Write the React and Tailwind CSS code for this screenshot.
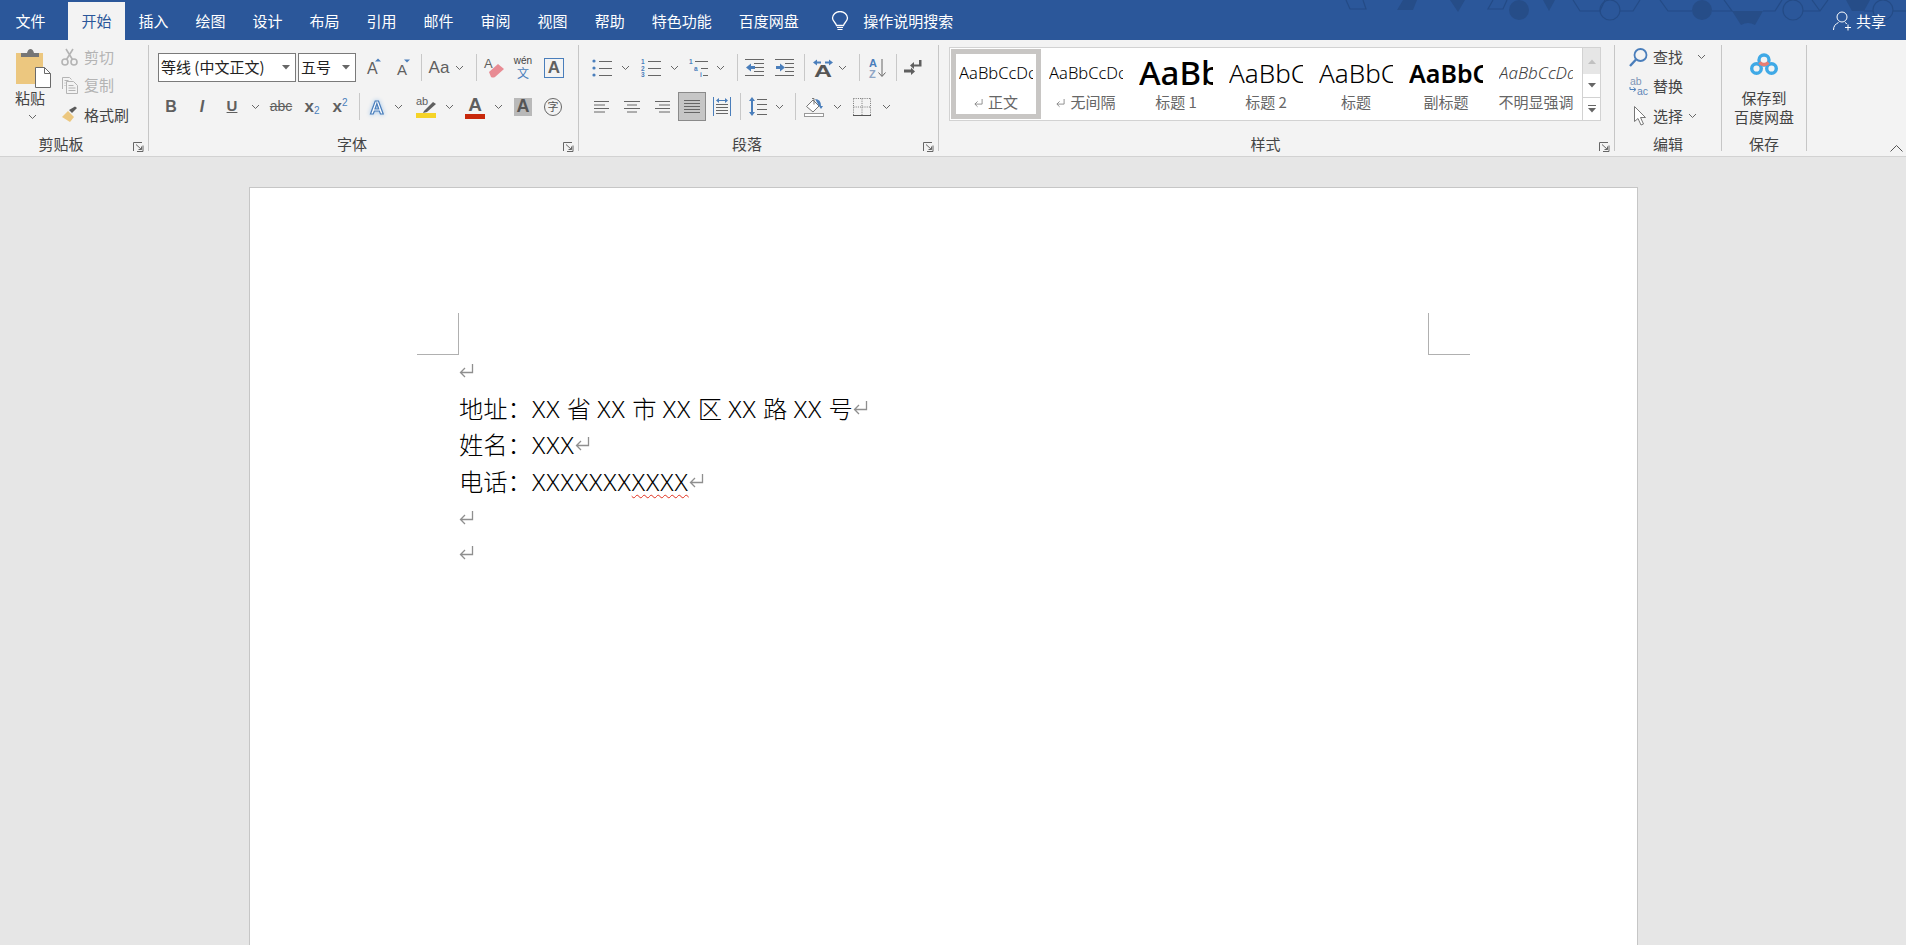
import React from "react";

const BLUE = "#4a7ebb";
const GR = "#5f5f5f";

const I = ({ c, children }) => (
  <div className={"flex items-center justify-center shrink-0 " + c}>{children}</div>
);
const Chev = ({ c }) => (
  <I c={"w-[10px] " + c}>
    <svg width="9" height="6" viewBox="0 0 9 6"><path d="M1 1l3.5 3.5L8 1" fill="none" stroke="#666" /></svg>
  </I>
);
const Sep = ({ c }) => <div className={"w-px h-[27px] bg-[#c8c8c8] shrink-0 " + c} />;
const Tri = () => (
  <svg width="8" height="5" viewBox="0 0 8 5"><path d="M0 0h8L4 4.5z" fill="#666" /></svg>
);
const Launcher = () => (
  <svg className="absolute right-[4px] bottom-[-1px]" width="11" height="10" viewBox="0 0 11 10">
    <path d="M.5 9V.5H9M10 3.5v6H4M3 2.5l5.5 5M8.5 4.5v3h-3" fill="none" stroke="#666" />
  </svg>
);
const Group = ({ c, label, lc, launcher, children }) => (
  <div className={"relative h-[106px] my-[5px] border-r border-[#c6c6c6] shrink-0 flex flex-col " + c}>
    <div className="h-[89px] shrink-0">{children}</div>
    <div className={"h-[20px] leading-[20px] shrink-0 text-center text-[15px] text-[#444] " + lc}>{label}</div>
    {launcher && <Launcher />}
  </div>
);
const Row = ({ c, children }) => <div className={"flex items-center h-[29px] " + c}>{children}</div>;

const Return = ({ c, color = "#8f8f8f", s = 1 }) => (
  <svg className={c} width={15 * s} height={14 * s} viewBox="0 0 15 14">
    <path d="M13.500 0v8.500H1.500M6 4l-4.500 4.500L6 13" fill="none" stroke={color} strokeWidth="1.300" />
  </svg>
);
const X = ({ children }) => <span className="tracking-[0.94px]">{children}</span>;

const Lines = ({ ys, x1, x2 }) => (
  <path d={ys.map((y) => `M${x1} ${y}H${x2}`).join("")} stroke="#666" fill="none" />
);

function Align({ kind }) {
  const rows = {
    left: [[0, 15], [0, 11], [0, 15], [0, 11]],
    center: [[0, 16], [3, 13], [0, 16], [3, 13]],
    right: [[1, 16], [5, 16], [1, 16], [5, 16]],
  }[kind];
  return (
    <svg width="16" height="14" viewBox="0 0 16 14">
      <path d={rows.map((r, i) => `M${r[0]} ${1.5 + i * 3.5}H${r[1]}`).join("")} stroke="#666" fill="none" />
    </svg>
  );
}

const sampleBase = "h-[38px] leading-[38px] w-[74px] mx-auto overflow-hidden whitespace-nowrap text-left font-['Noto_Sans',sans-serif] ";
const styles = [
  { t: "AaBbCcDc", l: "正文", r: 1, s: "text-[16.5px] font-light text-black", sel: 1 },
  { t: "AaBbCcDc", l: "无间隔", r: 1, s: "text-[16.5px] font-light text-black" },
  { t: "AaBb", l: "标题 1", s: "text-[33px] font-medium text-black" },
  { t: "AaBbC", l: "标题 2", s: "text-[26px] font-light text-black" },
  { t: "AaBbC", l: "标题", s: "text-[26px] font-light text-black" },
  { t: "AaBbC", l: "副标题", s: "text-[25px] font-semibold text-black" },
  { t: "AaBbCcDd", l: "不明显强调", s: "text-[17px] font-light italic text-[#404040]" },
];

export default function App() {
  return (
    <div className="h-[945px] w-full overflow-hidden flex flex-col bg-[#e6e6e6] font-['Noto_Sans_CJK_SC',sans-serif] text-[15px]">
      {/* title / tabs */}
      <div className="relative h-[40px] bg-[#2b579a] flex items-end text-white shrink-0">
        <svg className="absolute right-0 top-0" width="606" height="40" viewBox="1300 0 606 40">
          <g fill="#264d88">
            <path d="M1403 0h14l-4 10h-16z" />
            <path d="M1450 0h15l-7 12z" />
            <circle cx="1519" cy="10" r="10" />
            <path d="M1543 0h12l-6 11z" />
            <circle cx="1702" cy="10" r="10" />
            <path d="M1732 11h31l-8 14q-7-4-14 0z" />
            <path d="M1846 0h24l-6 11h-12z" />
          </g>
          <g fill="none" stroke="#244b86" strokeWidth="1.200">
            <path d="M1346 0l4 9h16l-3-9" />
            <path d="M1493 0l-5 9h15l4-9" />
            <path d="M1573 0l7 11h20l5-11M1620 11h13l7-11" />
            <circle cx="1610" cy="10" r="10" />
            <path d="M1660 0l8 11h24M1712 11h20l-8-11M1763 11h12l7-11M1732 11l-8-11" />
            <circle cx="1793" cy="10" r="10" />
            <path d="M1803 11h17l8-11M1820 11l-8-11M1864 11h9" />
            <circle cx="1883" cy="10" r="10" />
            <path d="M1893 11h13" />
          </g>
        </svg>
        <div className="relative w-[61px] h-[38px] leading-[38px] text-center">文件</div>
        <div className="relative ml-[7px] w-[57px] h-[38px] leading-[38px] text-center bg-[#f3f3f3] text-[#2b579a]">开始</div>
        {["插入", "绘图", "设计", "布局", "引用", "邮件", "审阅", "视图", "帮助", "特色功能", "百度网盘"].map((t) => (
          <div key={t} className="relative px-[13.5px] h-[38px] leading-[38px]">{t}</div>
        ))}
        <div className="relative ml-[19px] h-[38px] flex items-center">
          <svg width="18" height="21" viewBox="0 0 18 21">
            <path d="M5.500 14.500C5 11.500 1.500 10.500 1.500 7a7.500 6.500 0 0 1 15 0c0 3.500-3.500 4.500-4 7.500z" fill="none" stroke="#fff" strokeWidth="1.300" />
            <path d="M6 16.500h6M6.500 18.500h5" stroke="#fff" strokeWidth="1.200" />
          </svg>
          <span className="ml-[14px]">操作说明搜索</span>
        </div>
        <div className="relative ml-auto mr-[20px] h-[38px] flex items-center">
          <svg width="20" height="20" viewBox="0 0 20 20">
            <circle cx="9" cy="6" r="5" fill="none" stroke="#fff" />
            <path d="M.5 19c0-4 2-6 5-7.500M12 11.500c.8.4 1.500.9 2 1.500M15 13.500v6M12 16.500h6" fill="none" stroke="#fff" />
          </svg>
          <span className="ml-[3px]">共享</span>
        </div>
      </div>

      {/* ribbon */}
      <div className="h-[116px] bg-[#f3f3f3] flex shrink-0">
        {/* clipboard */}
        <Group c="w-[149px]" label="剪贴板" lc="pr-[26px]" launcher>
          <div className="flex">
            <div className="w-[61px] shrink-0 flex flex-col">
              <svg className="ml-[16px] mt-[4px]" width="35" height="39" viewBox="0 0 35 39">
                <rect x="0" y="4" width="27" height="31" fill="#ecc77f" />
                <path d="M5 8V4h6q1-4 3.500-4T18 4h5v4z" fill="#767676" />
                <path d="M19.500 18.500h9l6 6v14h-15z" fill="#fff" stroke="#6a6a6a" />
                <path d="M28.500 18.500v6h6" fill="none" stroke="#6a6a6a" />
              </svg>
              <div className="w-[60px] text-center h-[20px] leading-[20px] text-[#444]">粘贴</div>
              <div className="flex justify-center w-[64px] mt-[6px]"><Chev /></div>
            </div>
            <div className="flex flex-col">
              <div className="h-[24px] flex items-center text-[#b4b4b4]">
                <svg width="23" height="18" viewBox="0 0 23 18">
                  <g fill="none" stroke="#b4b4b4" strokeWidth="1.600">
                    <circle cx="4" cy="14" r="3" /><circle cx="13" cy="14" r="3" />
                    <path d="M5.500 11.500L12 1M11.500 11.500L5 1" />
                  </g>
                </svg>
                <span>剪切</span>
              </div>
              <div className="h-[24px] mt-[4px] flex items-center text-[#b4b4b4]">
                <svg width="23" height="18" viewBox="0 0 23 18">
                  <g fill="none" stroke="#b4b4b4">
                    <path d="M1.500 13V1.500h7l2 2" />
                    <path d="M5.500 5.500h7l4 4v8h-11z" />
                    <path d="M3.500 4.500h4M3.500 7h1M3.500 9.500h1M7.500 9.500h5M7.500 12h7M7.500 14.500h7" />
                  </g>
                </svg>
                <span>复制</span>
              </div>
              <div className="h-[24px] mt-[6px] flex items-center text-[#444]">
                <svg width="23" height="18" viewBox="0 0 23 18">
                  <path d="M1 11l6-6 6 6-4 5z" fill="#ecc77f" />
                  <path d="M8 4l3 3 5-5-2-1.500z" fill="#5a5a5a" />
                </svg>
                <span>格式刷</span>
              </div>
            </div>
          </div>
        </Group>

        {/* font */}
        <Group c="w-[430px]" label="字体" lc="pr-[23px]" launcher>
          <Row c="mt-[8px]">
            <div className="ml-[9px] w-[138px] h-[29px] bg-white border border-[#7a7a7a] flex items-center justify-between pl-[2px] pr-[5px] text-[#222]">
              <span>等线 (中文正文)</span><Tri />
            </div>
            <div className="ml-[2px] w-[58px] h-[29px] bg-white border border-[#7a7a7a] flex items-center justify-between pl-[2px] pr-[5px] text-[#222]">
              <span>五号</span><Tri />
            </div>
            <I c="ml-[6px] w-[22px] h-[29px]">
              <svg className="overflow-visible" width="22" height="22" viewBox="0 0 22 22">
                <text x="5" y="16.500" fontSize="16" fontFamily="Liberation Sans" fill={GR}>A</text>
                <path d="M13 4.500l3-3 3 3z" fill={BLUE} />
              </svg>
            </I>
            <I c="ml-[7px] w-[22px] h-[29px]">
              <svg className="overflow-visible" width="22" height="22" viewBox="0 0 22 22">
                <text x="6" y="17.500" fontSize="15" fontFamily="Liberation Sans" fill={GR}>A</text>
                <path d="M13 2.500h6l-3 3z" fill={BLUE} />
              </svg>
            </I>
            <Sep c="ml-[8px]" />
            <I c="ml-[6px] w-[22px] text-[17px] text-[#5f5f5f] font-['Liberation_Sans',sans-serif]">Aa</I>
            <Chev c="ml-[4px]" />
            <Sep c="ml-[12px]" />
            <I c="ml-[7px] w-[22px]">
              <svg className="overflow-visible" width="22" height="22" viewBox="0 0 22 22">
                <text x="0" y="11" fontSize="13" fontFamily="Liberation Sans" fill={GR}>A</text>
                <path d="M5 15l9-8 6 5-9 8q-2 1-4 0z" fill="#e88b93" />
              </svg>
            </I>
            <I c="ml-[7px] w-[20px] flex-col text-[#444] leading-[10px]">
              <span className="text-[10px] font-['Liberation_Sans',sans-serif]">wén</span>
              <span className="text-[12px] leading-[13px] text-[#4a7ebb]">文</span>
            </I>
            <I c="ml-[11px] w-[20px] h-[20px] border border-[#4a7ebb] text-[17px] font-bold text-[#5f5f5f] font-['Liberation_Sans',sans-serif]">A</I>
          </Row>
          <Row c="mt-[10px] font-['Liberation_Sans',sans-serif] text-[#5f5f5f]">
            <I c="ml-[14px] w-[16px] text-[16px] font-bold">B</I>
            <I c="ml-[16px] w-[14px] text-[16px] font-bold italic">I</I>
            <I c="ml-[15px] w-[16px] text-[15px] font-bold underline">U</I>
            <Chev c="ml-[10px]" />
            <I c="ml-[8px] w-[26px] text-[14px] line-through">abc</I>
            <I c="ml-[7px] w-[22px]">
              <span className="text-[17px] font-bold">x</span><span className="text-[10px] text-[#4a7ebb] mt-[8px]">2</span>
            </I>
            <I c="ml-[6px] w-[22px]">
              <span className="text-[17px] font-bold">x</span><span className="text-[10px] text-[#4a7ebb] mb-[8px]">2</span>
            </I>
            <Sep c="ml-[8px]" />
            <I c="ml-[7px] w-[22px]">
              <svg className="overflow-visible" width="22" height="22" viewBox="0 0 22 22">
                <text x="3" y="18" fontSize="19" fontWeight="700" fontFamily="Liberation Sans" fill="#fff" stroke={BLUE} strokeWidth="1.200" style={{ filter: "drop-shadow(0 0 2px #9cc3ea)" }}>A</text>
              </svg>
            </I>
            <Chev c="ml-[4px]" />
            <I c="ml-[13px] w-[20px]">
              <svg className="overflow-visible" width="20" height="22" viewBox="0 0 20 22">
                <text x="0" y="9" fontSize="11" fontFamily="Liberation Sans" fill={GR}>ab</text>
                <path d="M8 15l9-9 3 2-9 8-4 1z" fill={GR} />
                <rect x="0" y="17" width="20" height="5" fill="#f5d327" />
              </svg>
            </I>
            <Chev c="ml-[8px]" />
            <I c="ml-[11px] w-[20px] h-[24px] flex-col justify-end">
              <span className="text-[19px] font-bold leading-[19px]">A</span>
              <span className="block w-[20px] h-[5px] bg-[#c8280a]" />
            </I>
            <Chev c="ml-[8px]" />
            <I c="ml-[11px] w-[18px] h-[18px] bg-[#b9b9b9] text-[18px] font-bold text-[#555]">A</I>
            <I c="ml-[12px] w-[18px] h-[18px] rounded-full border border-[#666] text-[11px] leading-none text-[#555] font-['Noto_Sans_CJK_SC',sans-serif]">字</I>
          </Row>
        </Group>

        {/* paragraph */}
        <Group c="w-[360px]" label="段落" lc="pr-[23px]" launcher>
          <Row c="mt-[8px]">
            <I c="ml-[13px] w-[20px]">
              <svg width="20" height="18" viewBox="0 0 20 18">
                <g fill={BLUE}><circle cx="2" cy="2" r="1.600" /><circle cx="2" cy="9" r="1.600" /><circle cx="2" cy="16" r="1.600" /></g>
                <Lines ys={[2.5, 9.5, 16.5]} x1={7} x2={20} />
              </svg>
            </I>
            <Chev c="ml-[8px]" />
            <I c="ml-[11px] w-[20px]">
              <svg className="overflow-visible" width="20" height="18" viewBox="0 0 20 18">
                <g fill={BLUE} fontSize="6.500" fontWeight="700" fontFamily="Liberation Sans">
                  <text x="0" y="5">1</text><text x="0" y="11.500">2</text><text x="0" y="18">3</text>
                </g>
                <Lines ys={[2.5, 9.5, 16.5]} x1={7} x2={20} />
              </svg>
            </I>
            <Chev c="ml-[8px]" />
            <I c="ml-[10px] w-[22px]">
              <svg className="overflow-visible" width="22" height="18" viewBox="0 0 22 18">
                <g fill={BLUE} fontSize="6.500" fontWeight="700" fontFamily="Liberation Sans">
                  <text x="0" y="5">1</text><text x="5" y="12">a</text><text x="11" y="18">i</text>
                </g>
                <path d="M6 2.500H19M12 9.500H19M14 16.500H19" stroke="#666" fill="none" />
              </svg>
            </I>
            <Chev c="ml-[4px]" />
            <Sep c="ml-[12px]" />
            <I c="ml-[7px] w-[20px]">
              <svg width="20" height="17" viewBox="0 0 20 17">
                <Lines ys={[4.5, 8.5, 12.5]} x1={9} x2={19} />
                <path d="M1 8.500L6 4.500V7H10V10H6V12.500z" fill={BLUE} />
                <path d="M0 16.500H19M0 .5H19" stroke="#666" />
              </svg>
            </I>
            <I c="ml-[10px] w-[20px]">
              <svg width="20" height="17" viewBox="0 0 20 17">
                <Lines ys={[4.5, 8.5, 12.5]} x1={10} x2={19} />
                <path d="M10 8.500L5 4.500V7H1V10H5V12.500z" fill={BLUE} />
                <path d="M0 16.500H19M0 .5H19" stroke="#666" />
              </svg>
            </I>
            <Sep c="ml-[9px]" />
            <I c="ml-[7px] w-[22px]">
              <svg className="overflow-visible" width="22" height="18" viewBox="0 0 22 18">
                <path d="M1 3.500L5 .5v2h4v2H5v2zM21 3.500L17 .5v2h-4v2h4v2z" fill={BLUE} />
                <text x="2" y="18" fontSize="16" fontWeight="700" fontFamily="Liberation Sans" fill="#555" textLength="18" lengthAdjust="spacingAndGlyphs">A</text>
              </svg>
            </I>
            <Chev c="ml-[3px]" />
            <Sep c="ml-[12px]" />
            <I c="ml-[9px] w-[18px]">
              <svg className="overflow-visible" width="18" height="20" viewBox="0 0 18 20">
                <g fontFamily="Liberation Sans" fontSize="11" fontWeight="700">
                  <text x="0" y="9" fill={BLUE}>A</text><text x="0" y="20" fill="#8fa5c4">Z</text>
                </g>
                <path d="M13 1v17M9.500 14.500L13 18.500l3.500-4" fill="none" stroke="#666" />
              </svg>
            </I>
            <Sep c="ml-[9px]" />
            <I c="ml-[7px] w-[18px]">
              <svg width="18" height="15" viewBox="0 0 18 15">
                <path d="M15 0h2.500v6.500H10V9L6 5.500 10 2v2.500h5z" fill="#5f5f5f" />
                <path d="M0 9.500h7V7.500l4 4-4 3.500v-2.500H0z" fill="#5f5f5f" />
              </svg>
            </I>
          </Row>
          <Row c="mt-[10px]">
            <I c="ml-[15px] w-[16px]"><Align kind="left" /></I>
            <I c="ml-[14px] w-[16px]"><Align kind="center" /></I>
            <I c="ml-[14px] w-[16px]"><Align kind="right" /></I>
            <I c="ml-[8px] w-[28px] h-[29px] bg-[#c6c6c6] border border-[#8a8a8a]">
              <svg width="16" height="14" viewBox="0 0 16 14"><Lines ys={[0.5, 3.5, 6.5, 9.5, 12.5]} x1={0} x2={16} /></svg>
            </I>
            <I c="ml-[7px] w-[18px]">
              <svg width="18" height="19" viewBox="0 0 18 19">
                <path d="M.5 0v19M17.500 0v19" stroke={BLUE} fill="none" />
                <path d="M3 3.500L6 1v2h6V1l3 2.500L12 6V4H6v2z" fill={BLUE} />
                <Lines ys={[7.5, 10.5, 13.5, 16.5]} x1={3} x2={15} />
              </svg>
            </I>
            <Sep c="ml-[9px]" />
            <I c="ml-[8px] w-[18px]">
              <svg width="18" height="19" viewBox="0 0 18 19">
                <path d="M3 0L6 4H4v11h2l-3 4-3-4h2V4H0z" fill={BLUE} />
                <Lines ys={[2.5, 7.5, 12.5, 17.5]} x1={8} x2={18} />
              </svg>
            </I>
            <Chev c="ml-[7px]" />
            <Sep c="ml-[11px]" />
            <I c="ml-[8px] w-[20px]">
              <svg width="20" height="20" viewBox="0 0 20 20">
                <path d="M2.500 9.500L9 3l6 6-6 6z" fill="#fff" stroke="#777" />
                <path d="M8 1.500l2 0v6" fill="none" stroke="#777" />
                <path d="M11 2q6 0 6 7h2l-2 3-2-3z" fill={BLUE} />
                <rect x=".5" y="16.500" width="19" height="3" fill="#fff" stroke="#999" />
              </svg>
            </I>
            <Chev c="ml-[8px]" />
            <I c="ml-[11px] w-[18px]">
              <svg width="18" height="18" viewBox="0 0 18 18">
                <path d="M.5 .5H18M.5 .5V18M9 .5V18M17.500 .5V18M.5 9H18" fill="none" stroke="#777" strokeDasharray="1 1.200" />
                <path d="M0 17.500H18" stroke="#555" />
              </svg>
            </I>
            <Chev c="ml-[10px]" />
          </Row>
        </Group>

        {/* styles */}
        <Group c="w-[676px]" label="样式" lc="pr-[22px]" launcher>
          <div className="ml-[10px] mt-[2px] w-[652px] h-[74px] border border-[#d2d2d2] bg-white flex pl-px py-px">
            {styles.map((s) => (
              <div key={s.l} className={"w-[90px] h-[70px] shrink-0 border-[5px] text-center " + (s.sel ? "border-[#c8c6c4]" : "border-transparent")}>
                <div className={sampleBase + s.s}>{s.t}</div>
                <div className="h-[20px] leading-[20px] text-[15px] text-[#666] whitespace-nowrap flex justify-center items-center">
                  {s.r && <Return c="mr-[5px] mt-[3px]" color="#777" s={0.6} />}
                  {s.l}
                </div>
              </div>
            ))}
            <div className="ml-auto w-[18px] flex flex-col border-l border-[#d2d2d2] shrink-0 -my-px">
              <div className="h-[26px] bg-[#e6e6e6] flex items-center justify-center">
                <svg width="8" height="5" viewBox="0 0 8 5"><path d="M0 5h8L4 .5z" fill="#c0c0c0" /></svg>
              </div>
              <div className="h-[24px] flex items-center justify-center border-b border-[#d2d2d2]"><Tri /></div>
              <div className="h-[22px] flex flex-col items-center justify-center">
                <div className="w-[8px] h-px bg-[#666] mb-[2px]" />
                <Tri />
              </div>
            </div>
          </div>
        </Group>

        {/* editing */}
        <Group c="w-[107px]" label="编辑">
          <div className="h-[24px] flex items-center text-[#444]">
            <I c="ml-[14px] w-[24px] h-[24px] justify-start">
              <svg width="19" height="19" viewBox="0 0 19 19">
                <circle cx="11.500" cy="7" r="6" fill="none" stroke={BLUE} strokeWidth="1.800" />
                <path d="M7 11.500L1 18" stroke={BLUE} strokeWidth="2.400" />
              </svg>
            </I>
            <span>查找</span>
            <Chev c="ml-[13px]" />
          </div>
          <div className="h-[24px] mt-[5px] flex items-center text-[#444]">
            <I c="ml-[14px] w-[24px] h-[24px] justify-start">
              <svg className="overflow-visible" width="21" height="18" viewBox="0 0 21 18">
                <text x="1" y="8" fontSize="10.500" fontFamily="Liberation Sans" fill="#7f95b5">ab</text>
                <text x="8" y="17.500" fontSize="10.500" fontFamily="Liberation Sans" fill="#5f86b8">ac</text>
                <path d="M1 10v2.500h5M4.500 10.500L7 12.500l-2.500 2" fill="none" stroke={BLUE} />
              </svg>
            </I>
            <span>替换</span>
          </div>
          <div className="h-[24px] mt-[6px] flex items-center text-[#444]">
            <I c="ml-[19px] w-[19px] h-[24px] justify-start">
              <svg width="12" height="20" viewBox="0 0 12 20">
                <path d="M.5 .5v15l3.500-3 3 6.500 2.500-1-3-6.500 5 0z" fill="#fff" stroke="#777" />
              </svg>
            </I>
            <span>选择</span>
            <Chev c="ml-[4px]" />
          </div>
        </Group>

        {/* save */}
        <Group c="w-[85px]" label="保存">
          <div className="flex flex-col items-center text-[#444]">
            <svg className="mt-[8px]" width="28" height="24" viewBox="0 0 28 24">
              <g fill="none" strokeWidth="3.400">
                <circle cx="6.500" cy="15.500" r="4.800" stroke="#3fa9e6" />
                <circle cx="21.500" cy="15.500" r="4.800" stroke="#3fa9e6" />
                <circle cx="14" cy="7" r="5" stroke="#3fa9e6" />
                <path d="M9.500 9.500q4.500 4 9 0" stroke="#e77d73" />
              </g>
            </svg>
            <div className="mt-[11px] leading-[19px] h-[19px]">保存到</div>
            <div className="leading-[19px] h-[19px]">百度网盘</div>
          </div>
        </Group>

        <div className="flex-1 flex justify-end items-end pb-[4px] pr-[3px]">
          <svg width="13" height="7" viewBox="0 0 13 7"><path d="M.5 6.500l6-6 6 6" fill="none" stroke="#555" /></svg>
        </div>
      </div>
      <div className="h-px bg-[#d2d2d2] shrink-0" />

      {/* document */}
      <div className="flex-1 min-h-0 overflow-hidden pl-[249px] pt-[30px]">
        <div className="relative w-[1389px] h-[900px] bg-white border border-[#c6c6c6] pl-[209px] pt-[165px] text-black text-[24.3px] font-light font-['Noto_Sans','Noto_Sans_CJK_SC',sans-serif]">
          <div className="absolute left-[167px] top-[125px] w-[42px] h-[42px] border-r border-b border-[#b0b0b0]" />
          <div className="absolute left-[1178px] top-[125px] w-[42px] h-[42px] border-l border-b border-[#b0b0b0]" />
          <div className="h-[36px] leading-[36px] flex items-center"><Return /></div>
          <div className="h-[36px] leading-[36px] mt-[2px] flex items-center whitespace-pre">地址：<X>XX</X> 省 <X>XX</X> 市 <X>XX</X> 区 <X>XX</X> 路 <X>XX</X> 号<Return c="-mt-[2px]" /></div>
          <div className="h-[36px] leading-[36px] flex items-center whitespace-pre">姓名：<X>XXX</X><Return c="-mt-[2px]" /></div>
          <div className="h-[36px] leading-[36px] mt-[1px] flex items-center whitespace-pre">
            电话：<X>XXX</X> <X>XXXX</X> <span className="tracking-[0.94px] underline decoration-wavy decoration-[#e0301e] decoration-1 underline-offset-[3px]">XXXX</span><Return c="-mt-[2px]" />
          </div>
          <div className="h-[36px] leading-[36px] flex items-center"><Return /></div>
          <div className="h-[36px] leading-[36px] -mt-px flex items-center"><Return /></div>
        </div>
      </div>
    </div>
  );
}
